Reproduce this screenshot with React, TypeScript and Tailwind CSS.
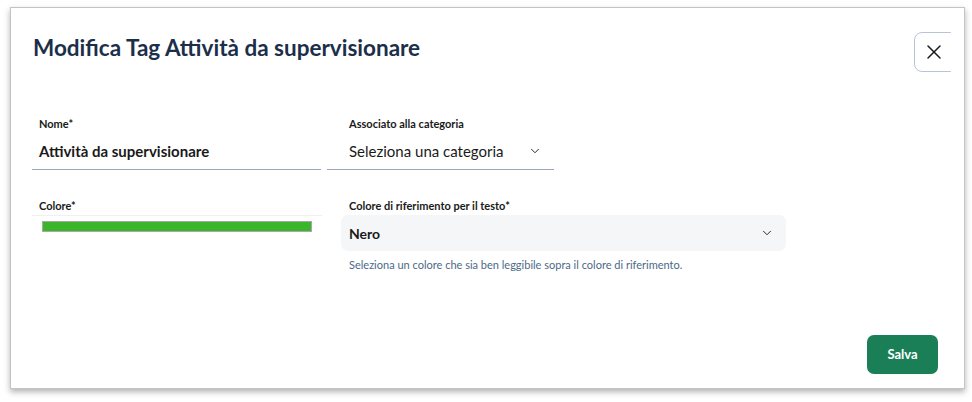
import { X, ChevronDown } from "lucide-react";

const font = { fontFamily: "Lato, 'Noto Sans', sans-serif" };

export default function App() {
  return (
    <div className="w-[972px] h-[402px] bg-white pt-[7px] pl-[10px]" style={font}>
      <div className="w-[955px] h-[382px] bg-white border border-[#c4c4c4] shadow-[0_3px_6px_rgba(0,0,0,0.3)] flex flex-col">
        {/* Header */}
        <div className="flex items-start justify-between pt-[24px] pl-[22px] pr-[13px]">
          <h2 className="mt-[2px] text-[22.5px] leading-[28px] font-bold text-[#1c2f4a]">
            Modifica Tag Attività da supervisionare
          </h2>
          <div className="w-[37px] h-[40px] overflow-hidden">
            <button className="w-[44px] h-[40px] rounded-[8px] border border-[#b9c3d8] flex items-center pl-[7px] text-[#1a1a1a]">
              <X size={24} strokeWidth={1.5} />
            </button>
          </div>
        </div>

        {/* Form */}
        <div className="mt-[45px] pl-[21px] flex flex-col">
          <div className="flex">
            <div className="w-[289px]">
              <label className="block pl-[7px] text-[11px] leading-[14px] font-bold text-[#1a1a1a]">Nome*</label>
              <div className="h-[39px] pl-[7px] pt-[2px] flex items-center border-b border-[#9ba6b6] text-[15px] font-bold text-[#1a1a1a]">
                Attività da supervisionare
              </div>
            </div>
            <div className="w-[227px] ml-[6px]">
              <label className="block pl-[22px] text-[11px] leading-[14px] font-bold text-[#1a1a1a]">
                Associato alla categoria
              </label>
              <div className="h-[39px] pl-[22px] pr-[12px] pt-[2px] flex items-center justify-between border-b border-[#9ba6b6] text-[15px] text-[#1a1a1a]">
                <span>Seleziona una categoria</span>
                <ChevronDown size={14} strokeWidth={1.6} />
              </div>
            </div>
          </div>

          <div className="flex mt-[29px]">
            <div className="w-[290px]">
              <label className="block pl-[7px] text-[11px] leading-[14px] font-bold text-[#1a1a1a]">Colore*</label>
              <div className="mt-[2px] border-t border-[#f0f0f0] pt-[5px] px-[10px] w-[290px]">
                <div className="h-[11px] bg-[#3bb52a] border border-[#a8a8a8]" />
              </div>
            </div>
            <div className="w-[445px] ml-[19px]">
              <label className="block pl-[8px] text-[11px] leading-[14px] font-bold text-[#1a1a1a]">
                Colore di riferimento per il testo*
              </label>
              <div className="mt-[2px] h-[36px] rounded-[7px] bg-[#f5f6f7] pl-[8px] pr-[12px] flex items-center justify-between text-[14px] font-bold text-[#1a1a1a]">
                <span>Nero</span>
                <ChevronDown size={14} strokeWidth={1.6} />
              </div>
              <p className="mt-[7px] pl-[8px] text-[11px] leading-[14px] text-[#4c6987]">
                Seleziona un colore che sia ben leggibile sopra il colore di riferimento.
              </p>
            </div>
          </div>
        </div>

        {/* Footer */}
        <div className="mt-auto flex justify-end pr-[26px] pb-[14px]">
          <button className="w-[71px] h-[39px] rounded-[7px] bg-[#1a7f57] text-white text-[13px] font-bold">
            Salva
          </button>
        </div>
      </div>
    </div>
  );
}
